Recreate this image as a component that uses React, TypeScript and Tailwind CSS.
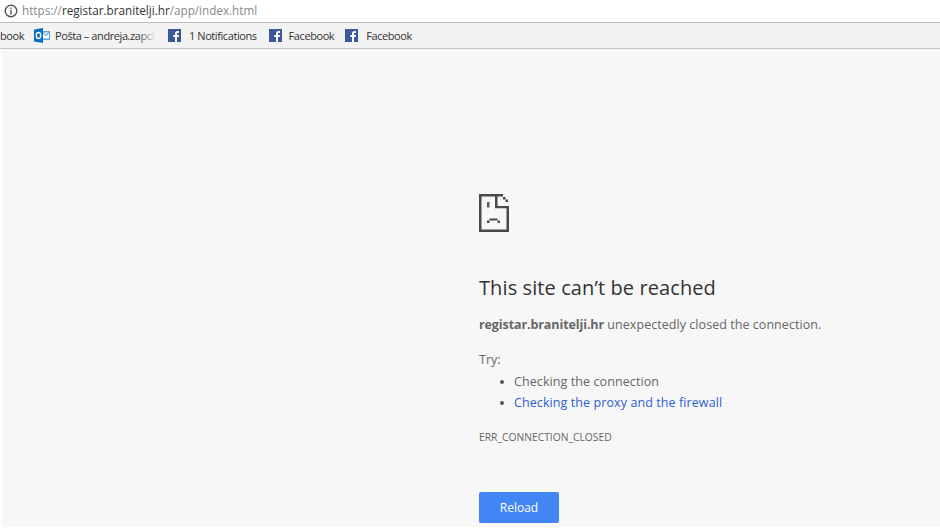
const font = { fontFamily: '"Open Sans", "Noto Sans", sans-serif' };

function Fb() {
  return (
    <svg width="13" height="13" viewBox="0 0 13 13" className="shrink-0">
      <rect width="13" height="13" fill="#3b5998" />
      <path d="M9 13V8h1.700l.3-2H9V4.900C9 4.300 9.200 4 9.900 4H11V2.200C10.700 2.100 10.200 2 9.500 2 8 2 7 2.900 7 4.600V6H5.300v2H7v5z" fill="#fff" />
    </svg>
  );
}

function Outlook() {
  return (
    <svg width="16" height="15" viewBox="0 0 16 15" className="shrink-0">
      <rect x="8" y="3" width="8" height="9" fill="#5fa8e0" />
      <path d="M9 4.500h6v6H9z" fill="#fff" />
      <path d="M9 4.500l3 3 3-3" fill="none" stroke="#0a6fc2" strokeWidth="1" />
      <path d="M0 1.500L9 0v15L0 13.500z" fill="#0a6fc2" />
      <ellipse cx="4.500" cy="7.500" rx="2.200" ry="3" fill="none" stroke="#fff" strokeWidth="1.400" />
    </svg>
  );
}

function SadFile() {
  return (
    <svg width="30" height="38" viewBox="0 0 30 38" className="block">
      <path d="M0 0h24v2.500H2.500v33h25V14H30v24H0z" fill="#4a4a4a" />
      <path d="M16 2h2.500v10H30v2.200H16z" fill="#4a4a4a" />
      <path d="M24 3h2.500v2.500H24zM26.500 5.500H29V8h-2.500z" fill="#4a4a4a" />
      <path d="M8 8h2.500v5.500H8z" fill="#5a5a5a" />
      <path d="M10.500 24.500h8v2h-8zM8 26.500h2.500V29H8zM18.500 26.500H21V29h-2.500z" fill="#4a4a4a" />
    </svg>
  );
}

function Bookmark({ icon, label, className, gap }: { icon: React.ReactNode; label: string; className: string; gap: string }) {
  return (
    <div className={`flex items-center shrink-0 ${gap} ${className}`}>
      {icon}
      <span className="text-[11px] leading-none text-[#333] tracking-[-0.42px] whitespace-nowrap">{label}</span>
    </div>
  );
}

export default function App() {
  return (
    <div style={font} className="w-[940px] h-[529px] overflow-hidden flex flex-col bg-white">
      <div className="h-[22px] shrink-0 bg-white border-b border-[#bcbcbc] flex items-center pl-[4px] gap-[4px] box-content">
        <svg width="14" height="14" viewBox="0 0 14 14">
          <circle cx="7" cy="7" r="5.800" fill="none" stroke="#555" strokeWidth="1.400" />
          <path d="M6.300 6h1.400v4.500H6.300zM6.300 3.500h1.400v1.400H6.300z" fill="#555" />
        </svg>
        <div className="text-[11.700px] leading-none whitespace-nowrap text-[#8a8a8a]">
          https://<span className="text-[#333]">registar.branitelji.hr</span>/app/index.html
        </div>
      </div>
      <div className="h-[25px] shrink-0 bg-[#f2f2f2] border-b border-[#c4c4c4] flex items-center box-content overflow-hidden">
        <span className="text-[11px] leading-none text-[#333] tracking-[-0.42px] w-[24px] shrink-0 whitespace-nowrap">book</span>
        <div className="relative ml-[10px] w-[123px] shrink-0">
          <Bookmark className="" gap="gap-[5px]" icon={<Outlook />} label="Pošta – andreja.zapci" />
          <div className="absolute right-0 top-0 bottom-0 w-[20px] bg-gradient-to-r from-transparent to-[#f2f2f2]" />
        </div>
        <Bookmark className="ml-[11px]" gap="gap-[8px]" icon={<Fb />} label="1 Notifications" />
        <Bookmark className="ml-[12px]" gap="gap-[7px]" icon={<Fb />} label="Facebook" />
        <Bookmark className="ml-[11px]" gap="gap-[8px]" icon={<Fb />} label="Facebook" />
      </div>
      <div className="flex-1 ml-[2px] mb-[2px] bg-[#f7f7f7] pl-[477px] pt-[145px]">
        <SadFile />
        <h1 className="mt-[42px] text-[20px] leading-[27px] font-normal text-[#333] tracking-[0.1px] whitespace-nowrap">This site can’t be reached</h1>
        <p className="mt-[14px] text-[12.500px] leading-[20px] text-[#666] whitespace-nowrap tracking-[0.05px]">
          <span className="font-bold tracking-[-0.1px]">registar.branitelji.hr</span> unexpectedly closed the connection.
        </p>
        <p className="mt-[15px] text-[12.500px] leading-[20px] text-[#666]">Try:</p>
        <ul className="mt-[1px] text-[12.500px] leading-[21px] text-[#666] whitespace-nowrap tracking-[0.09px]">
          <li className="flex items-center pl-[21px] gap-[10px]"><span className="w-[4px] h-[4px] rounded-full bg-[#555]" />Checking the connection</li>
          <li className="flex items-center pl-[21px] gap-[10px]"><span className="w-[4px] h-[4px] rounded-full bg-[#555]" /><span className="text-[#2a5fd0]">Checking the proxy and the firewall</span></li>
        </ul>
        <p className="mt-[17px] text-[10.300px] leading-[14px] text-[#666] whitespace-nowrap">ERR_CONNECTION_CLOSED</p>
        <button className="mt-[48px] block w-[80px] h-[31px] rounded-[2px] bg-[#4285f4] text-white text-[12px] font-medium">Reload</button>
      </div>
    </div>
  );
}
